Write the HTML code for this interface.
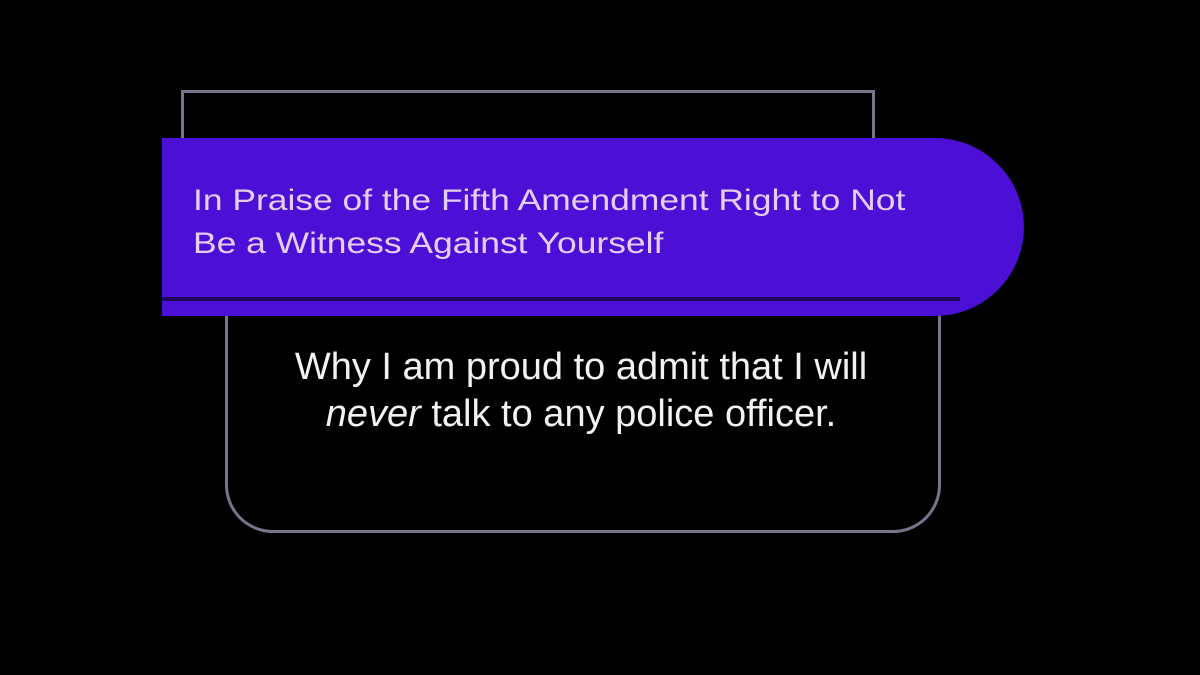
<!DOCTYPE html>
<html><head><style>
body{margin:0;width:1200px;height:675px;background:#000;overflow:hidden;position:relative;font-family:"Liberation Sans",sans-serif}
.top{position:absolute;left:181px;top:90px;width:688px;height:60px;border:3px solid #77758a;border-bottom:none}
.low{position:absolute;left:225px;top:300px;width:710px;height:230px;border:3px solid #77758a;border-top:none;border-radius:0 0 48px 48px}
.band{position:absolute;left:162px;top:138px;width:862px;height:178px;background:#4b0fd6;border-radius:0 90px 90px 0}
.line{position:absolute;left:162px;top:297px;width:798px;height:4px;background:#22085a}
.t{position:absolute;left:193px;top:179px;color:#e6cdf4;font-size:30px;line-height:43px;transform:scaleX(1.18);transform-origin:0 0;white-space:nowrap}
.b{position:absolute;left:226px;top:344px;width:710px;text-align:center;color:#f2f2f2;font-size:38px;line-height:47px;white-space:nowrap}
</style></head><body>
<div class="top"></div><div class="low"></div>
<div class="band"></div><div class="line"></div>
<div class="t">In Praise of the Fifth Amendment Right to Not<br>Be a Witness Against Yourself</div>
<div class="b">Why I am proud to admit that I will<br><i>never</i> talk to any police officer.</div>
</body></html>
